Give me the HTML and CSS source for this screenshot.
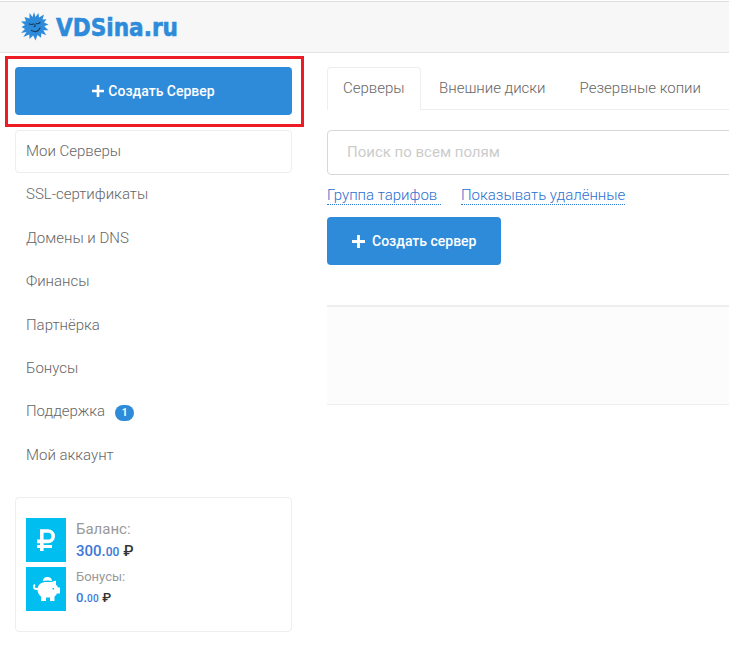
FILE: index.html
```html
<!DOCTYPE html>
<html lang="ru">
<head>
<meta charset="utf-8">
<title>VDSina.ru</title>
<link rel="stylesheet" href="styles.css">
</head>
<body>
<header class="header">
  <svg class="sun" width="28" height="30" viewBox="0 0 28 30">
    <path fill="#2e8bda" d="M13 0l1.500 5 3-4 .5 4.500 5-3-1.500 5 4-.2-2.500 3.200 4.500 2-4.200 1.800 4 4-5 0 3 5-5-2-.3 4.500-3.500-2.800-2 5.500-2.300-5-3.700 3.500-.2-4.500-6 2.500 3.200-5L0 21l4-4-3.500-2L4 13 0 9.500l5-.3L3.500 5 8.500 6.500 8.500 1l3 4z"/>
    <path fill="none" stroke="#153f68" stroke-width="1.200" stroke-linecap="round" d="M8.500 12q2 1 3.800 0M15.500 11.500q1.800.8 3.500-1M14 12v2.500h-1M10.500 18.500q6 3 8.500-2.500"/>
  </svg>
  <svg class="wordmark" width="124" height="24"><text x="0" y="20" textLength="122" lengthAdjust="spacingAndGlyphs">VDSina.ru</text></svg>
</header>
<div class="layout">
  <aside class="sidebar">
    <div class="highlight">
      <a class="btn btn-wide"><svg class="plus" viewBox="0 0 12 12"><path d="M6 0v12M0 6h12"/></svg>Создать Сервер</a>
    </div>
    <nav class="menu">
      <a class="item active">Мои Серверы</a>
      <a class="item">SSL-сертификаты</a>
      <a class="item">Домены и DNS</a>
      <a class="item">Финансы</a>
      <a class="item">Партнёрка</a>
      <a class="item">Бонусы</a>
      <a class="item">Поддержка<span class="badge">1</span></a>
      <a class="item">Мой аккаунт</a>
    </nav>
    <section class="wallet">
      <div class="row">
        <div class="tile"><svg width="40" height="44" viewBox="0 0 40 44"><path fill="none" stroke="#fff" stroke-width="3.600" d="M15.800 33V13H22a5.200 5.200 0 0 1 0 10.400H11"/><path fill="none" stroke="#fff" stroke-width="3" d="M11 28.500h15"/></svg></div>
        <div class="info"><div class="label">Баланс:</div><div class="sum"><b>300.<small>00</small></b> <span class="currency">₽</span></div></div>
      </div>
      <div class="row bonus">
        <div class="tile"><svg width="40" height="44" viewBox="0 0 40 44"><path fill="#fff" d="M16.800 14q.5-4 4.700-4t4.500 4q-4.500-1-9.200 0zM9.500 18q-1.500 1.500 0 2.800l2.200.2c.8-4 4.300-6 8.300-6h5q2 0 3-1l2-.2v4q1.500 1.200 2 2.700h2v6h-3q-1 2-2.500 3V34h-4.500v-3.500h-4V34H15v-4.500q-3-2-3.500-6.500-4.500.2-4.500-3.200 0-2 1.500-2.800z"/><path fill="#00bff0" d="M26.500 21H28v1.500h-1.500z"/></svg></div>
        <div class="info"><div class="label">Бонусы:</div><div class="sum"><b>0.<small>00</small></b> <span class="currency">₽</span></div></div>
      </div>
    </section>
  </aside>
  <main class="content">
    <div class="tabs">
      <a class="tab current">Серверы</a>
      <a class="tab">Внешние диски</a>
      <a class="tab">Резервные копии</a>
    </div>
    <input class="search" placeholder="Поиск по всем полям">
    <div class="filters"><a class="filter group">Группа тарифов</a><a class="filter">Показывать удалённые</a></div>
    <a class="btn btn-create"><svg class="plus" viewBox="0 0 12 12"><path d="M6 0v12M0 6h12"/></svg>Создать сервер</a>
    <div class="table"></div>
  </main>
</div>
</body>
</html>
```
FILE: styles.css
```css
* { box-sizing: border-box; }
body {
  margin: 0;
  height: 652px;
  overflow: hidden;
  background: #fff;
  color: #666;
  font: 300 15px/20px Roboto, "Liberation Sans", sans-serif;
}
.header {
  display: flex;
  height: 52px;
  margin-top: 1px;
  padding: 10px 0 0 21px;
  background: #f7f7f7;
  border-top: 1px solid #ddd;
  border-bottom: 1px solid #e4e4e4;
}
.wordmark { margin: 4px 0 0 7px; overflow: visible; }
.wordmark text {
  font: bold 24px "DejaVu Sans", sans-serif;
  fill: #2e8bda;
  stroke: #2e8bda;
  stroke-width: 0.6px;
}
.layout { display: flex; }
.sidebar { flex: none; width: 327px; padding: 3px 0 0 5px; }
.highlight {
  width: 299px;
  height: 71px;
  padding: 8px 9px 8px 7px;
  border: 3px solid #ed1c24;
}
.btn {
  display: flex;
  align-items: center;
  height: 48px;
  border-radius: 4px;
  background: #2e8bda;
  color: #fff;
  font-size: 14px;
  font-weight: 500;
}
.btn-wide { justify-content: center; }
.plus { width: 12px; height: 12px; margin-right: 4px; }
.plus path { fill: none; stroke: #fff; stroke-width: 2.6; }
.menu { width: 277px; margin: 3px 0 0 10px; }
.item {
  display: flex;
  align-items: center;
  height: 43.45px;
  padding: 0 11px 1px;
}
.item.active { padding: 0 10px 1px; height: 43px; border: 1px solid #eee; border-radius: 4px; }
.badge {
  width: 19px;
  height: 16px;
  margin: 3px 0 0 10px;
  border-radius: 8px;
  background: #2e8bda;
  color: #fff;
  font-size: 10px;
  font-weight: 700;
  line-height: 16px;
  text-align: center;
}
.wallet {
  width: 277px;
  height: 135px;
  margin: 20px 0 0 10px;
  padding: 20px 10px;
  border: 1px solid #eee;
  border-radius: 4px;
}
.row { display: flex; height: 44px; margin-bottom: 5px; }
.tile { width: 40px; height: 44px; background: #00bff0; }
.info { margin-left: 10px; font-weight: 400; }
.label { color: #999; line-height: 22px; }
.sum { color: #333; line-height: 22px; }
.sum b { color: #3c78d8; font-weight: 500; }
.sum small { font-size: 12px; }
.currency { font-weight: 500; }
.bonus .info { font-size: 13px; }
.bonus .label { line-height: 19px; }
.bonus .sum { line-height: 23px; }
.bonus small { font-size: 10px; letter-spacing: 0.3px; }
.content { flex: 1; min-width: 0; }
.tabs { display: flex; height: 43px; margin-top: 14px; border-bottom: 1px solid #eee; }
.tab { height: 43px; padding: 11px 16px 0 18px; white-space: nowrap; }
.tab.current {
  width: 94px;
  padding: 10px 15px 0;
  background: #fff;
  border: 1px solid #eee;
  border-bottom: 0;
  border-radius: 4px 4px 0 0;
}
.search {
  display: block;
  width: 420px;
  height: 45px;
  margin-top: 20px;
  padding: 0 19px 1px;
  border: 1px solid #d8d8d8;
  border-radius: 4px;
  font: 400 15px Roboto, sans-serif;
}
.search::placeholder { color: #ccc; }
.filters { display: flex; gap: 20px; margin-top: 10px; }
.filter { height: 20px; border-bottom: 1px dotted #2e7cd8; color: #2a70d0; white-space: nowrap; }
.group { width: 114px; }
.btn-create { width: 174px; margin-top: 12px; padding-left: 25px; }
.btn-create .plus { width: 13px; height: 13px; margin-right: 7px; }
.table {
  height: 100px;
  margin-top: 40px;
  background: #fcfcfc;
  border-top: 2px solid #eee;
  border-bottom: 1px solid #eee;
}
```
